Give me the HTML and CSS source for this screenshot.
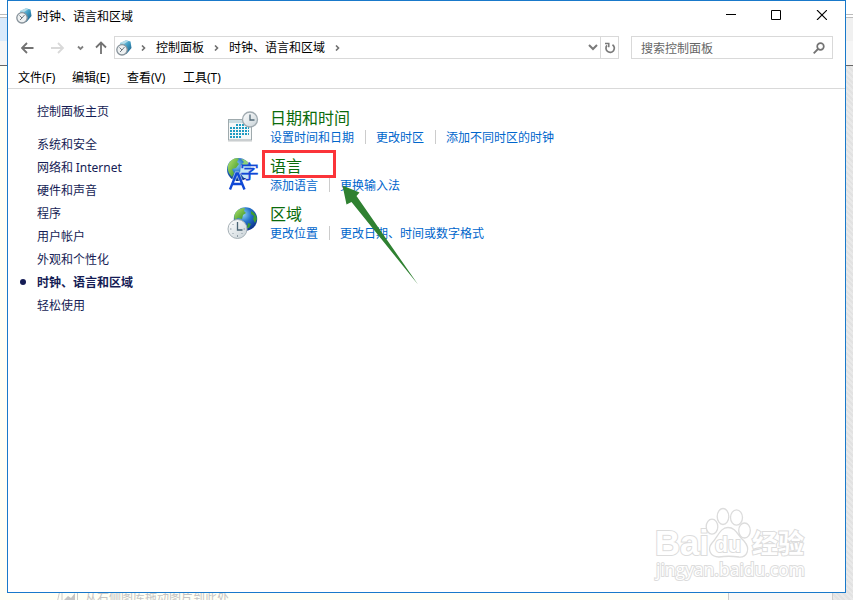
FILE: index.html
```html
<!DOCTYPE html>
<html lang="zh-CN">
<head>
    <meta charset="UTF-8">
    <meta name="viewport" content="width=device-width, initial-scale=1.0">
    <title>时钟、语言和区域</title>
    <link rel="stylesheet" href="styles.css">
</head>
<body>
    <!-- Page behind the window -->
    <div class="backdrop">
        <div class="strip-top"></div>
        <div class="strip-tabs"></div>
        <div class="strip-tools"></div>
        <div class="strip-body">
            <div class="paper">
                <svg class="picture-icon" width="22" height="14" viewBox="0 0 22 14">
                    <path d="M3 0L0.500 11L5 13M5 0V14M20.500 0V14" fill="none" stroke="#ccc"/>
                    <path d="M8 1h4v2h-4zM7 10l4-4 3 2 4-5v10H7z" fill="#c4c4c4"/>
                </svg>
                <span>从右侧图库拖动图片到此处</span>
            </div>
            <div class="panel"></div>
        </div>
    </div>

    <div class="window">
        <div class="title-bar">
            <svg class="app-icon" width="16" height="16" viewBox="0 0 16 16">
                <defs>
                    <linearGradient id="cube" x1="0" y1="0" x2="1" y2="1">
                        <stop offset="0" stop-color="#b8e2ee"/>
                        <stop offset="0.5" stop-color="#3e9dc4"/>
                        <stop offset="1" stop-color="#174f78"/>
                    </linearGradient>
                    <g id="clock-app">
                        <path d="M4 3L10 0.300L14.500 1.500L15.500 8L10.500 14L4 9z" fill="url(#cube)"/>
                        <path d="M4 3L10 0.300L12.500 1L8 4z" fill="#b5dce9"/>
                        <circle cx="6" cy="9.800" r="5.200" fill="#eef1f2" stroke="#87929a" stroke-width="1.300"/>
                        <path d="M3.500 7.500L6 10L8.500 7M6 10L4 12" fill="none" stroke="#6b757d"/>
                    </g>
                </defs>
                <use href="#clock-app"/>
            </svg>
            <span class="title">时钟、语言和区域</span>
            <svg class="window-buttons" width="101" height="10" viewBox="0 0 101 10">
                <path d="M0 4.500H10M45.500 0.500H54.500V9.500H45.500z" fill="none" stroke="#000"/>
                <path d="M91 0L101 10M101 0L91 10" fill="none" stroke="#000" stroke-width="1.100"/>
            </svg>
        </div>

        <div class="nav-bar">
            <svg class="nav-arrows" width="86" height="14" viewBox="0 0 86 14">
                <path d="M12.500 7H1.500M6 2L1 7L6 12" fill="none" stroke="#727272" stroke-width="1.800"/>
                <path d="M30 7H41.500M37 2L42 7L37 12" fill="none" stroke="#d9d9d9" stroke-width="1.800"/>
                <path d="M57 5.500L59.500 8L62 5.500" fill="none" stroke="#808080" stroke-width="1.800"/>
                <path d="M80 13V2M75 6.500L80 1.500L85 6.500" fill="none" stroke="#727272" stroke-width="1.800"/>
            </svg>
            <div class="address">
                <svg class="app-icon" width="16" height="16" viewBox="0 0 16 16"><use href="#clock-app"/></svg>
                <svg class="crumb-arrow" width="5" height="6" viewBox="0 0 5 6"><path d="M1 0.500L3.500 3L1 5.500"/></svg>
                <span>控制面板</span>
                <svg class="crumb-arrow" width="5" height="6" viewBox="0 0 5 6"><path d="M1 0.500L3.500 3L1 5.500"/></svg>
                <span>时钟、语言和区域</span>
                <svg class="crumb-arrow" width="5" height="6" viewBox="0 0 5 6"><path d="M1 0.500L3.500 3L1 5.500"/></svg>
                <svg class="drop-arrow" width="10" height="7" viewBox="0 0 10 7"><path d="M1 1L5 5L9 1" fill="none" stroke="#7a7a7a" stroke-width="2"/></svg>
                <div class="refresh">
                    <svg width="12" height="12" viewBox="0 0 12 12">
                        <path d="M8.500 2.700A4.200 4.200 0 1 1 3 3.400" fill="none" stroke="#7a7a7a" stroke-width="1.700"/>
                        <path d="M1 1.500H4.800V5.300" fill="none" stroke="#7a7a7a" stroke-width="1.500"/>
                    </svg>
                </div>
            </div>
            <div class="search">
                <span>搜索控制面板</span>
                <svg width="12" height="12" viewBox="0 0 12 12">
                    <circle cx="7.500" cy="4.500" r="3.300" fill="none" stroke="#737373" stroke-width="1.700"/>
                    <path d="M5 7L0.700 11.300" stroke="#737373" stroke-width="1.800"/>
                </svg>
            </div>
        </div>

        <div class="menu-bar">
            <span>文件(F)</span>
            <span>编辑(E)</span>
            <span>查看(V)</span>
            <span>工具(T)</span>
        </div>

        <div class="content">
            <ul class="sidebar">
                <li class="home">控制面板主页</li>
                <li>系统和安全</li>
                <li>网络和 <span class="latin">Internet</span></li>
                <li>硬件和声音</li>
                <li>程序</li>
                <li>用户帐户</li>
                <li>外观和个性化</li>
                <li class="current">时钟、语言和区域</li>
                <li>轻松使用</li>
            </ul>

            <div class="categories">
                <div class="category">
                    <svg width="32" height="32" viewBox="0 0 32 32">
                        <defs>
                            <radialGradient id="globe" cx="0.4" cy="0.3" r="0.75">
                                <stop offset="0" stop-color="#8fd3f5"/>
                                <stop offset="0.45" stop-color="#2674ca"/>
                                <stop offset="1" stop-color="#082b85"/>
                            </radialGradient>
                            <linearGradient id="land" x1="0" y1="0" x2="1" y2="1">
                                <stop offset="0" stop-color="#b8e66e"/>
                                <stop offset="1" stop-color="#2d8c22"/>
                            </linearGradient>
                            <linearGradient id="face" x1="0" y1="0" x2="1" y2="1">
                                <stop offset="0" stop-color="#fff"/>
                                <stop offset="1" stop-color="#c8d2d7"/>
                            </linearGradient>
                        </defs>
                        <rect x="1.500" y="8.500" width="23" height="20.500" fill="#f5f8f8" stroke="#9faaad"/>
                        <path d="M2 9H24V12H2z" fill="#c9dce1"/>
                        <path d="M1 30H25" stroke="#c5c9ca"/>
                        <path d="M9 14H22M3 17H22M3 20H22M3 23H22M3 26H15" stroke="#1e9cc2" stroke-width="2" stroke-dasharray="2 1"/>
                        <circle cx="23" cy="8.500" r="7.500" fill="url(#face)" stroke="#a0aab0" stroke-width="1.300"/>
                        <path d="M23 3.500V9H27.500" fill="none" stroke="#536a77" stroke-width="1.300"/>
                    </svg>
                    <div class="category-text">
                        <h2>日期和时间</h2>
                        <div class="tasks">
                            <a>设置时间和日期</a>
                            <a>更改时区</a>
                            <a>添加不同时区的时钟</a>
                        </div>
                    </div>
                </div>

                <div class="category">
                    <svg width="32" height="34" viewBox="0 0 32 34">
                        <circle cx="11.500" cy="13.500" r="11.500" fill="url(#globe)"/>
                        <path d="M1.500 8Q5 1.500 12 2.500L10 6L12 8L9 12L5 13L7 17L5 21Q-1 15 1.500 8z" fill="url(#land)"/>
                        <path d="M14 3Q20 3.500 22 8L18 10L15 8L17 6z" fill="#8fd178"/>
                        <path d="M14 9H24V22H17L13 17z" fill="#c4e6f5"/>
                        <path d="M3 33.500L9.500 17.500H10.900L17.500 33.500M5.500 28H15" fill="none" stroke="#fff" stroke-opacity="0.600" stroke-width="4"/>
                        <path d="M3 33.500L9.500 17.500H10.900L17.500 33.500M5.500 28H15" fill="none" stroke="#1048d6" stroke-width="2.400"/>
                        <text class="glyph" x="13" y="23">字</text>
                    </svg>
                    <div class="category-text">
                        <h2>语言</h2>
                        <div class="tasks">
                            <a>添加语言</a>
                            <a>更换输入法</a>
                        </div>
                    </div>
                </div>

                <div class="category">
                    <svg width="32" height="32" viewBox="0 0 32 32">
                        <circle cx="18.500" cy="12" r="11.700" fill="url(#globe)"/>
                        <path d="M9 5Q12 1 18 1L17 4L19 6L16 8L15 12L11 11L8 13Q6 9 9 5z" fill="url(#land)"/>
                        <path d="M24 4Q29 6 30 12L28 16L26 12L27 9L24 7zM21 16L24 17L22 21L20 21z" fill="#3c9c34"/>
                        <circle cx="10.500" cy="22" r="9.500" fill="url(#face)" stroke="#a7b1b7"/>
                        <path d="M10.500 15V23H15.500" fill="none" stroke="#4a6474" stroke-width="1.300"/>
                        <path d="M3 22H4.500M10.500 28V30M16.500 22H18M5.500 17L6.500 18M5.500 27L6.500 26M15.500 27L14.500 26" stroke="#8d9ba4"/>
                    </svg>
                    <div class="category-text">
                        <h2>区域</h2>
                        <div class="tasks">
                            <a>更改位置</a>
                            <a>更改日期、时间或数字格式</a>
                        </div>
                    </div>
                </div>
            </div>
        </div>
    </div>

    <!-- Marks over the window -->
    <div class="highlight"></div>
    <svg class="pointer" width="80" height="104" viewBox="0 0 80 104">
        <path d="M1.500 3.500L18.500 10.500L15.500 14L77 102.500L10.500 20L5.500 22.500z" fill="#2f8131"/>
    </svg>
    <svg class="watermark" width="160" height="80" viewBox="0 0 160 80">
        <g class="mark">
            <text class="brand" x="4" y="52" textLength="54" lengthAdjust="spacingAndGlyphs">Bai</text>
            <text class="brand-cn" x="101" y="50" textLength="52">经验</text>
            <ellipse cx="61" cy="23.700" rx="5.800" ry="7.500"/>
            <ellipse cx="72" cy="13.500" rx="5.800" ry="8"/>
            <ellipse cx="85.500" cy="14.500" rx="6" ry="7.700"/>
            <ellipse cx="93.500" cy="27.500" rx="5.800" ry="7.500"/>
            <path d="M77 24.500C85 24.500 87 33 93 38C100 46 96 54.500 88 54C81 53 74 53 68 54C59 54 56 46 61 40C67 34 69 24.500 77 24.500z"/>
            <text class="du" x="64" y="49" textLength="26" lengthAdjust="spacingAndGlyphs">du</text>
            <text class="site" x="5" y="73" textLength="149" lengthAdjust="spacingAndGlyphs">jingyan.baidu.com</text>
        </g>
    </svg>
</body>
</html>
```
FILE: styles.css
```css
* {
    box-sizing: border-box;
}

body {
    font-family: "Noto Sans CJK SC", sans-serif;
    font-size: 12px;
    margin: 0;
    width: 853px;
    height: 600px;
    position: relative;
    overflow: hidden;
    color: #000;
    background: #fff;
}

svg {
    display: block;
    flex-shrink: 0;
}

/* Backdrop */
.backdrop {
    display: flex;
    flex-direction: column;
    height: 600px;
}

.strip-top {
    height: 18px;
    border-bottom: 1px solid #bbb;
    background: linear-gradient(#fff 14px, #bbb 14px, #bbb 15px, #fff 15px);
}

.strip-tabs {
    height: 23px;
    background: linear-gradient(to right, #d9eafb 50%, #f0f0f0 50%);
}

.strip-tools {
    height: 25px;
    background: #f5f5f5;
    border-bottom: 1px solid #666;
}

.strip-body {
    flex: 1;
    display: flex;
    background: repeating-linear-gradient(45deg, #e2e2e2 0 2px, #e9e9e9 2px 4px);
}

.paper {
    width: 728px;
    background: #fffff5;
    display: flex;
    align-items: flex-end;
    padding-left: 57px;
    gap: 6px;
    color: #c4c4c4;
    line-height: 12px;
}

.paper .picture-icon {
    margin-bottom: -4px;
}

.paper span {
    margin-bottom: -3px;
}

.panel {
    width: 105px;
    background: #f8f8f8;
    border-left: 1px solid #ccc;
    border-right: 1px solid #ccc;
}

/* Window */
.window {
    position: absolute;
    left: 7px;
    top: 0;
    width: 839px;
    height: 593px;
    background: #fff;
    border: 1px solid #1979ca;
}

.title-bar {
    height: 29px;
    display: flex;
    align-items: center;
    padding: 0 18px 0 8px;
}

.title {
    margin-left: 5px;
    padding-bottom: 1px;
    flex: 1;
}

.window-buttons {
    margin-bottom: 1px;
}

.nav-bar {
    display: flex;
    align-items: center;
    height: 35px;
    padding: 0 12px 0 13px;
}

.nav-arrows {
    margin-right: 7px;
}

.address {
    width: 505px;
    height: 23px;
    border: 1px solid #d9d9d9;
    display: flex;
    align-items: center;
    padding-left: 1px;
}

.address span {
    padding-bottom: 2px;
}

.crumb-arrow {
    margin: 0 10px;
    fill: none;
    stroke: #707070;
    stroke-width: 1.6;
}

.address .app-icon + .crumb-arrow {
    margin-left: 9px;
}

.drop-arrow {
    margin-left: auto;
    margin-right: 2px;
}

.refresh {
    width: 18px;
    height: 21px;
    border-left: 1px solid #d9d9d9;
    display: flex;
    align-items: center;
    justify-content: center;
}

.search {
    width: 202px;
    height: 23px;
    margin-left: 12px;
    border: 1px solid #d9d9d9;
    display: flex;
    align-items: center;
    justify-content: space-between;
    padding: 0 7px 0 9px;
    color: #666;
}

.menu-bar {
    height: 24px;
    display: flex;
    align-items: center;
    gap: 15px;
    padding-left: 10px;
    border-bottom: 1px solid #d9d9d9;
    font-family: "Noto Sans", "Noto Sans CJK SC", sans-serif;
}

.menu-bar span {
    width: 40px;
    white-space: nowrap;
}

.menu-bar span:first-child {
    width: 39px;
}

.menu-bar span:nth-child(3) {
    width: 41px;
}

.content {
    display: flex;
}

.sidebar {
    list-style: none;
    margin: 0;
    padding: 10px 0 0 29px;
    width: 219px;
    color: #151c55;
}

.sidebar li {
    height: 23px;
    line-height: 23px;
}

.sidebar .home {
    margin-bottom: 10px;
}

.latin {
    font-family: "Noto Sans", sans-serif;
}

.current {
    font-weight: bold;
    position: relative;
}

.current::before {
    content: "";
    position: absolute;
    left: -17px;
    top: 9px;
    width: 6px;
    height: 6px;
    border-radius: 50%;
    background: #151c55;
}

.categories {
    padding-top: 17px;
}

.category {
    display: flex;
    gap: 11px;
    height: 48px;
}

.category > svg {
    margin-top: 5px;
}

.category:nth-child(2) > svg {
    margin-top: 2px;
}

.category h2 {
    margin: 0;
    font-size: 16px;
    font-weight: normal;
    line-height: 22px;
    color: #0b6b0b;
}

.tasks {
    display: flex;
    line-height: 18px;
}

.tasks a {
    display: flex;
    align-items: center;
    color: #0066cc;
}

.tasks a + a::before {
    content: "";
    height: 14px;
    margin: 0 10px 0 11px;
    border-left: 1px solid #ccc;
}

.glyph {
    font-size: 19px;
    fill: #1048d6;
    stroke: #1048d6;
    stroke-width: 0.3px;
}

/* Annotations */
.highlight {
    position: absolute;
    left: 262px;
    top: 150px;
    width: 74px;
    height: 28px;
    border: 3px solid #fb3439;
}

.pointer {
    position: absolute;
    left: 341px;
    top: 182px;
}

.watermark {
    position: absolute;
    left: 651px;
    top: 503px;
}

.mark {
    fill: #fff;
    stroke: #dcdcdc;
    stroke-width: 1.3px;
}

.mark text {
    stroke-width: 2px;
    paint-order: stroke;
}

.brand {
    font-family: "Liberation Sans", sans-serif;
    font-size: 35px;
    font-weight: bold;
}

.brand-cn {
    font-size: 26px;
    font-weight: bold;
}

.du {
    font-family: "Liberation Sans", sans-serif;
    font-size: 22px;
    font-weight: bold;
}

.site {
    font-family: "Open Sans", sans-serif;
    font-size: 18px;
}
```
